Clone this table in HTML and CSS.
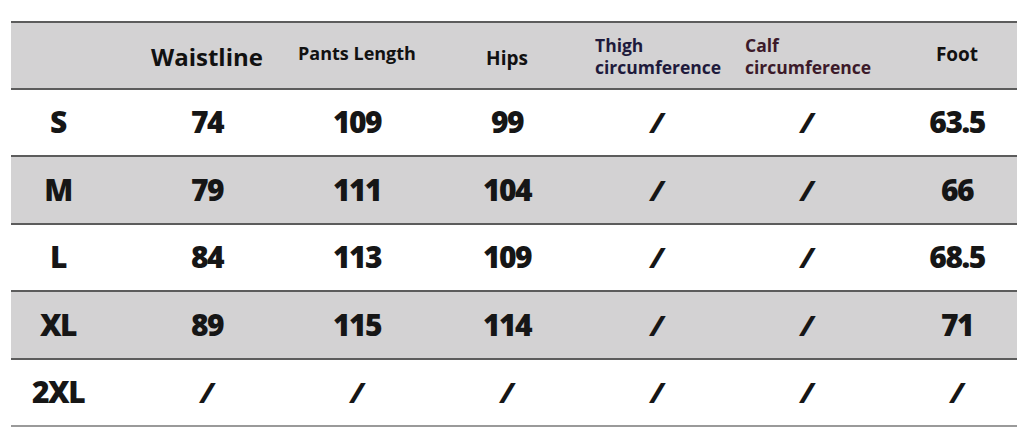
FILE: index.html
```html
<!DOCTYPE html>
<html lang="en">
<head>
<meta charset="utf-8">
<title>Size chart</title>
<link rel="stylesheet" href="styles.css">
</head>
<body>
<div class="chart">
  <div class="row head">
    <div class="cell first"></div>
    <div class="cell h-waist">Waistline</div>
    <div class="cell h-pants">Pants Length</div>
    <div class="cell h-hips">Hips</div>
    <div class="cell h-two h-thigh"><span>Thigh<br>circumference</span></div>
    <div class="cell h-two h-calf"><span>Calf<br>circumference</span></div>
    <div class="cell last h-foot">Foot</div>
  </div>
  <div class="row">
    <div class="cell first">S</div>
    <div class="cell">74</div>
    <div class="cell">109</div>
    <div class="cell">99</div>
    <div class="cell slash">/</div>
    <div class="cell slash">/</div>
    <div class="cell last">63.5</div>
  </div>
  <div class="row shade tall">
    <div class="cell first">M</div>
    <div class="cell">79</div>
    <div class="cell">111</div>
    <div class="cell">104</div>
    <div class="cell slash">/</div>
    <div class="cell slash">/</div>
    <div class="cell last">66</div>
  </div>
  <div class="row">
    <div class="cell first">L</div>
    <div class="cell">84</div>
    <div class="cell">113</div>
    <div class="cell">109</div>
    <div class="cell slash">/</div>
    <div class="cell slash">/</div>
    <div class="cell last">68.5</div>
  </div>
  <div class="row shade tall">
    <div class="cell first">XL</div>
    <div class="cell">89</div>
    <div class="cell">115</div>
    <div class="cell">114</div>
    <div class="cell slash">/</div>
    <div class="cell slash">/</div>
    <div class="cell last">71</div>
  </div>
  <div class="row end">
    <div class="cell first">2XL</div>
    <div class="cell slash">/</div>
    <div class="cell slash">/</div>
    <div class="cell slash">/</div>
    <div class="cell slash">/</div>
    <div class="cell slash">/</div>
    <div class="cell last slash">/</div>
  </div>
</div>
</body>
</html>
```

FILE: styles.css
```css
html, body {
  margin: 0;
  padding: 0;
  background: #ffffff;
}

.chart {
  margin: 21px 0 0 11px;
  width: 1006px;
  border-top: 2px solid #5c5c5c;
}

.row {
  display: grid;
  grid-template-columns: 121px repeat(5, 150px) 134px;
  height: 67px;
  box-sizing: border-box;
  border-bottom: 2px solid #5c5c5c;
  background: #ffffff;
}

.row.tall {
  height: 68px;
}

.row.head,
.row.shade {
  background: #d3d2d3;
}

.row.end {
  border-bottom-color: #9a9a9a;
}

.cell {
  display: flex;
  align-items: center;
  justify-content: center;
  font-family: "Open Sans", "Noto Sans", sans-serif;
  font-weight: 800;
  font-size: 30px;
  color: #161616;
  letter-spacing: -1.5px;
  padding-bottom: 2px;
}

.cell.slash {
  font-style: italic;
  font-size: 29px;
  letter-spacing: 0;
}

.cell.first {
  padding-right: 27px;
}

.cell.last {
  padding-left: 16px;
}

.head .cell {
  font-family: "Open Sans", "Noto Sans", sans-serif;
  font-weight: 700;
  color: #111111;
  letter-spacing: 0;
  padding-bottom: 0;
}

.h-waist {
  font-size: 24px;
  letter-spacing: -0.3px;
  padding-top: 1px;
}

.head .h-pants {
  font-size: 18px;
  padding-bottom: 6px;
}

.h-hips {
  font-size: 19px;
  padding-top: 4px;
}

.h-two {
  justify-content: flex-start;
  font-size: 17.5px;
  line-height: 22px;
  padding-left: 13px;
}

.head .h-thigh {
  color: #1e1a3c;
}

.head .h-calf {
  color: #3c1a2a;
}

.head .h-foot {
  font-size: 19px;
  padding-bottom: 4px;
}
```
